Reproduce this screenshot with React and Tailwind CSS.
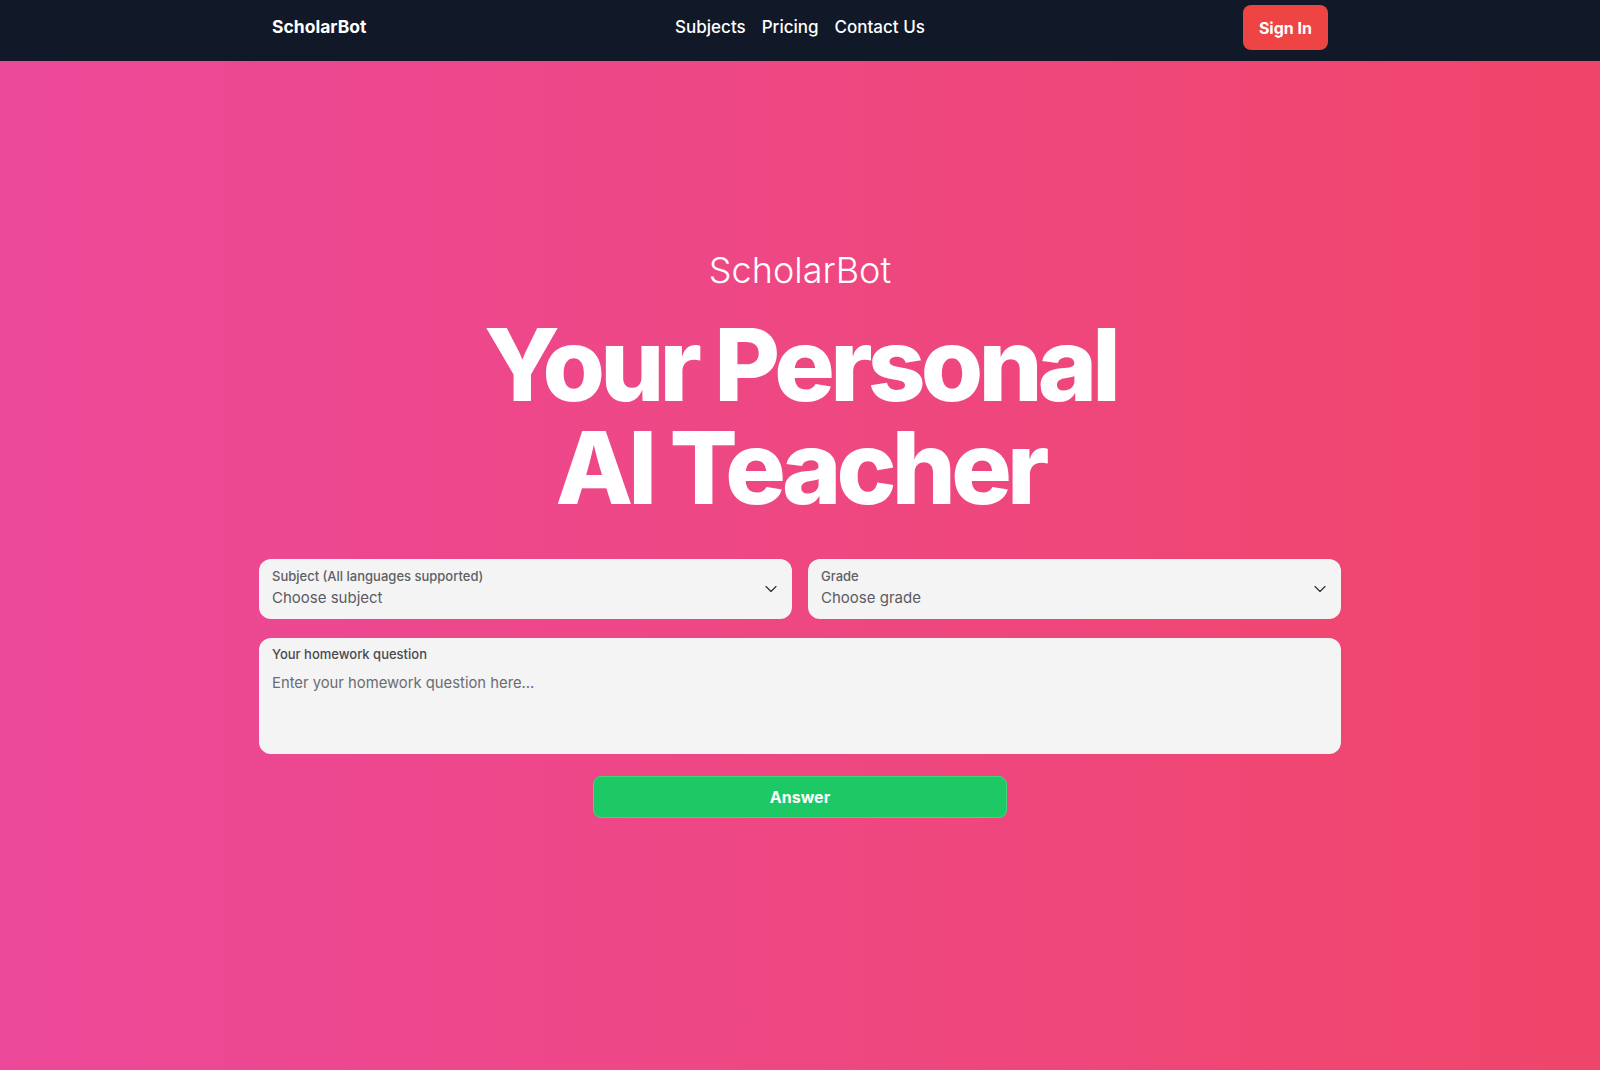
import { ChevronDown } from 'lucide-react';

const font = { fontFamily: 'Inter, "Noto Sans", sans-serif' };

/* ---------- Select field ---------- */
function SelectField({ label, value }) {
  return (
    <div className="flex-1 h-[60px] bg-[#f4f4f4] rounded-xl pl-[13px] pr-[11px] pt-[9px] flex items-start justify-between">
      <div className="flex flex-col gap-[4px]">
        <span className="text-[13px] leading-4 font-medium text-[#5f5f66]">{label}</span>
        <span className="text-[15px] leading-5 text-[#5b5b63]">{value}</span>
      </div>
      <ChevronDown className="w-5 h-5 mt-[11px] text-[#2f2f35]" strokeWidth={1.4} />
    </div>
  );
}

export default function App() {
  return (
    <div className="min-h-[1070px] flex flex-col" style={font}>
      {/* ── Navbar ── */}
      <nav className="h-[61px] bg-[#111827] pb-[6px]">
        <div className="max-w-6xl mx-auto px-12 h-full grid grid-cols-3 items-center">
          <span className="text-[17.5px] font-bold text-white">ScholarBot</span>
          <div className="flex items-center justify-center gap-4 text-[17px] font-medium text-white">
            <a>Subjects</a>
            <a>Pricing</a>
            <a>Contact Us</a>
          </div>
          <div className="flex justify-end">
            <button className="h-[45px] px-[16px] rounded-lg bg-[#ef4444] text-white font-bold text-base">Sign In</button>
          </div>
        </div>
      </nav>

      {/* ── Hero ── */}
      <main className="flex-1 bg-linear-to-r from-[#ec4899] to-[#f0456a] pt-[189px]">
        <div className="flex flex-col items-center text-white">
          <p className="text-4xl font-light">ScholarBot</p>
          <h1 className="mt-[23px] flex flex-col items-center text-[101px] font-extrabold tracking-[-0.048em] text-center">
            <span className="block h-[103px] leading-[103px]">Your Personal</span>
            <span className="block h-[103px] leading-[103px]">AI Teacher</span>
          </h1>
        </div>

        <div className="w-[1082px] mx-auto mt-[40px]">
          <div className="flex gap-4">
            <SelectField label="Subject (All languages supported)" value="Choose subject" />
            <SelectField label="Grade" value="Choose grade" />
          </div>

          <div className="mt-[19px] h-[116px] bg-[#f4f4f4] rounded-xl px-[13px] pt-[8px]">
            <p className="text-[13px] leading-4 font-medium text-[#4a4a52]">Your homework question</p>
            <p className="mt-[11px] text-[14.8px] leading-5 text-[#6b6b73]">Enter your homework question here...</p>
          </div>

          <div className="flex justify-center mt-[22px]">
            <button className="w-[414px] h-[42px] rounded-lg bg-[#1dc964] border border-[#3fd67e] text-white font-bold text-base">
              Answer
            </button>
          </div>
        </div>
      </main>
    </div>
  );
}
